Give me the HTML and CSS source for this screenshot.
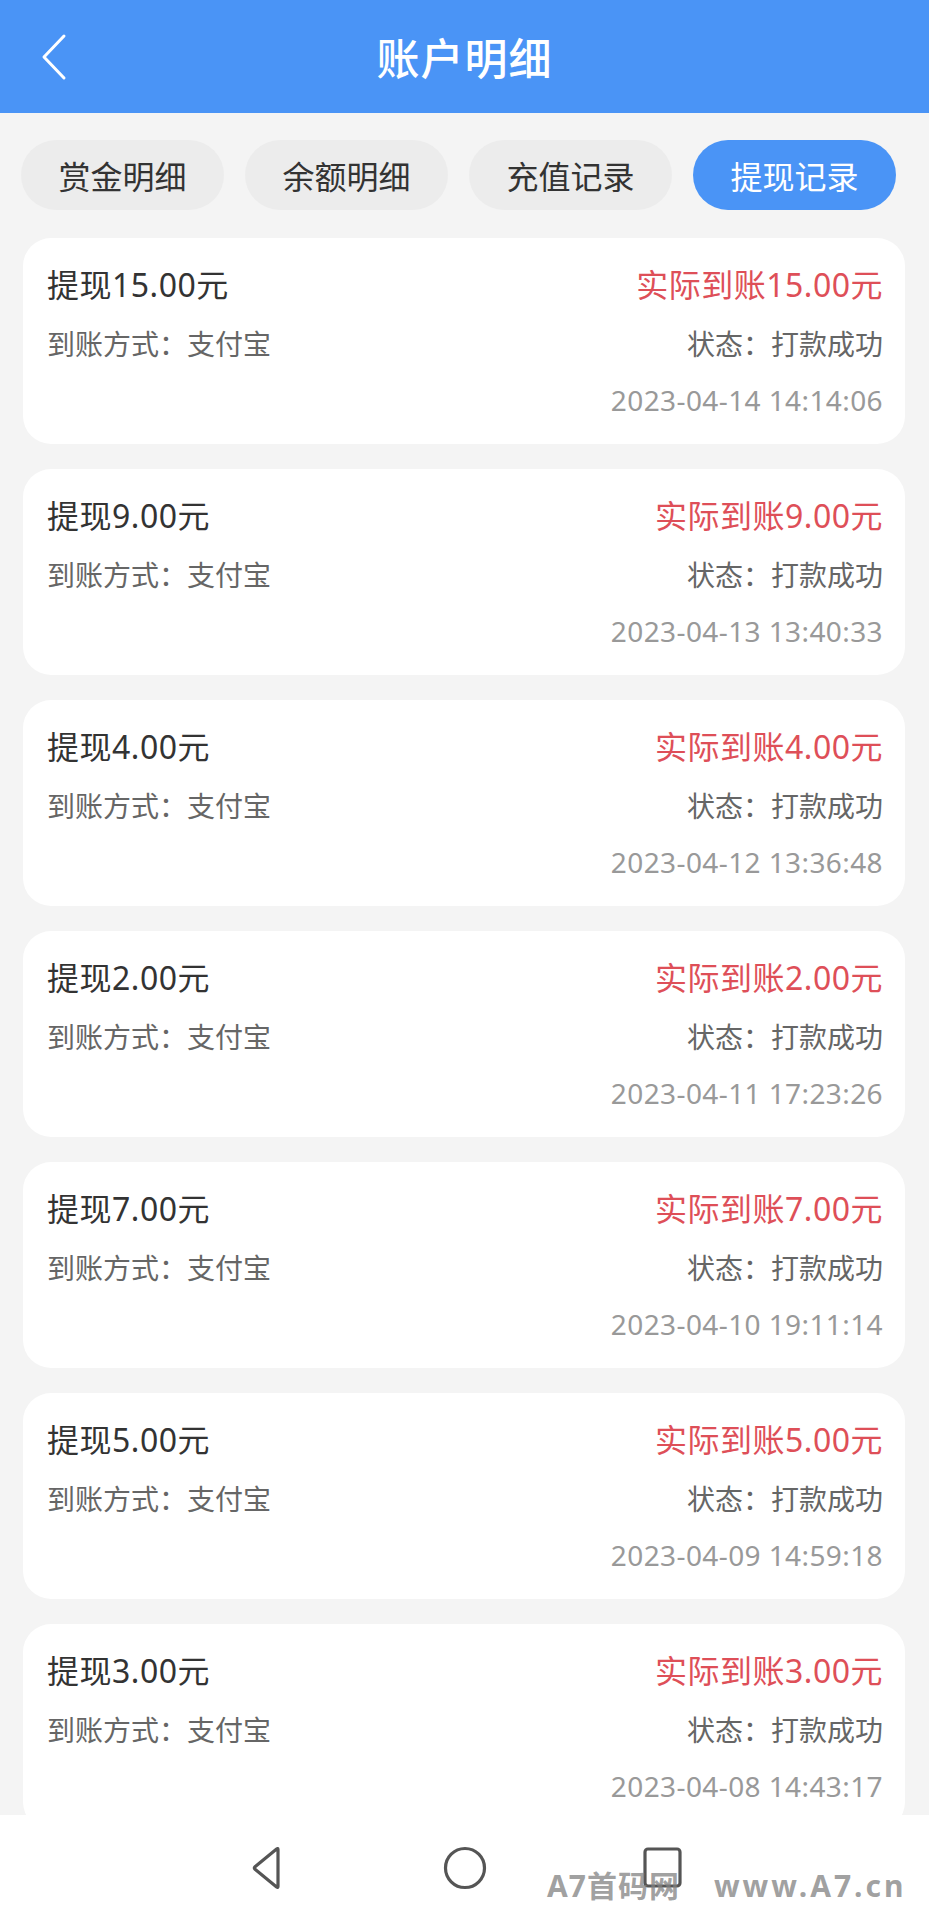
FILE: index.html
```html
<!DOCTYPE html>
<html>
<head>
<meta charset="UTF-8">
<title>账户明细</title>
<link rel="stylesheet" href="styles.css">
</head>
<body>
  <div class="page">
    <div class="top-bar">
      <div class="back-btn">
        <svg width="28" height="48" viewBox="0 0 28 48">
          <path d="M24 3 L4 24 L24 45" fill="none" stroke="#fff" stroke-width="3" stroke-linecap="round" stroke-linejoin="round"/>
        </svg>
      </div>
      <div class="title">账户明细</div>
      <div></div>
    </div>

    <div class="content">
      <div class="tabs">
        <div class="tab">赏金明细</div>
        <div class="tab">余额明细</div>
        <div class="tab">充值记录</div>
        <div class="tab active">提现记录</div>
      </div>

      <div class="record-list">
        <div class="record">
          <div class="row">
            <span class="amount">提现15.00元</span>
            <span class="real">实际到账15.00元</span>
          </div>
          <div class="row sub">
            <span>到账方式：支付宝</span>
            <span>状态：打款成功</span>
          </div>
          <div class="time">2023-04-14 14:14:06</div>
        </div>
        <div class="record">
          <div class="row">
            <span class="amount">提现9.00元</span>
            <span class="real">实际到账9.00元</span>
          </div>
          <div class="row sub">
            <span>到账方式：支付宝</span>
            <span>状态：打款成功</span>
          </div>
          <div class="time">2023-04-13 13:40:33</div>
        </div>
        <div class="record">
          <div class="row">
            <span class="amount">提现4.00元</span>
            <span class="real">实际到账4.00元</span>
          </div>
          <div class="row sub">
            <span>到账方式：支付宝</span>
            <span>状态：打款成功</span>
          </div>
          <div class="time">2023-04-12 13:36:48</div>
        </div>
        <div class="record">
          <div class="row">
            <span class="amount">提现2.00元</span>
            <span class="real">实际到账2.00元</span>
          </div>
          <div class="row sub">
            <span>到账方式：支付宝</span>
            <span>状态：打款成功</span>
          </div>
          <div class="time">2023-04-11 17:23:26</div>
        </div>
        <div class="record">
          <div class="row">
            <span class="amount">提现7.00元</span>
            <span class="real">实际到账7.00元</span>
          </div>
          <div class="row sub">
            <span>到账方式：支付宝</span>
            <span>状态：打款成功</span>
          </div>
          <div class="time">2023-04-10 19:11:14</div>
        </div>
        <div class="record">
          <div class="row">
            <span class="amount">提现5.00元</span>
            <span class="real">实际到账5.00元</span>
          </div>
          <div class="row sub">
            <span>到账方式：支付宝</span>
            <span>状态：打款成功</span>
          </div>
          <div class="time">2023-04-09 14:59:18</div>
        </div>
        <div class="record">
          <div class="row">
            <span class="amount">提现3.00元</span>
            <span class="real">实际到账3.00元</span>
          </div>
          <div class="row sub">
            <span>到账方式：支付宝</span>
            <span>状态：打款成功</span>
          </div>
          <div class="time">2023-04-08 14:43:17</div>
        </div>
      </div>
    </div>

    <div class="nav-bar">
      <svg class="nav-icon" width="44" height="44" viewBox="0 0 44 44">
        <path d="M33 3.5 L33 40.5 Q33 42 31.6 41 L10 23.2 Q8.6 22 10 20.8 L31.6 3 Q33 2 33 3.5 Z" fill="none" stroke="#555" stroke-width="3.2" stroke-linejoin="round"/>
      </svg>
      <svg class="nav-icon" width="44" height="44" viewBox="0 0 44 44">
        <circle cx="22" cy="22" r="19.5" fill="none" stroke="#555" stroke-width="3.2"/>
      </svg>
      <svg class="nav-icon" width="44" height="44" viewBox="0 0 44 44">
        <rect x="4" y="3" width="35" height="37" rx="3" fill="none" stroke="#555" stroke-width="3.2"/>
      </svg>
      <div class="watermark"><span>A7首码网</span><span class="site">www.A7.cn</span></div>
    </div>
  </div>
</body>
</html>
```

FILE: styles.css
```css
body {
  margin: 0;
  padding: 0;
  background-color: #f4f4f4;
  font-family: "Noto Sans", "Noto Sans CJK SC", sans-serif;
  color: #333;
}
.page {
  width: 929px;
  height: 1920px;
  display: flex;
  flex-direction: column;
  overflow: hidden;
}
.top-bar {
  height: 113px;
  flex-shrink: 0;
  background-color: #4a94f6;
  display: grid;
  grid-template-columns: 1fr auto 1fr;
  align-items: center;
}
.back-btn {
  padding-left: 40px;
  display: flex;
  align-items: center;
}
.top-bar .title {
  color: #fff;
  font-size: 43px;
  font-weight: 500;
  letter-spacing: 1px;
}
.content {
  flex: 1;
  overflow: hidden;
}
.tabs {
  display: flex;
  gap: 21px;
  padding: 27px 0 0 21px;
}
.tab {
  width: 203px;
  height: 70px;
  border-radius: 35px;
  background-color: #ececec;
  display: flex;
  align-items: center;
  justify-content: center;
  font-size: 32px;
  color: #333;
}
.tab.active {
  background-color: #4a94f6;
  color: #fff;
}
.record-list {
  padding: 28px 24px 0 23px;
  display: flex;
  flex-direction: column;
  gap: 25px;
}
.record {
  background-color: #fff;
  border-radius: 28px;
  height: 206px;
  box-sizing: border-box;
  padding: 27px 22px 24px 24px;
  flex-shrink: 0;
}
.row {
  display: flex;
  justify-content: space-between;
  line-height: 40px;
}
.amount {
  font-size: 32px;
  letter-spacing: 0.5px;
  color: #333;
}
.real {
  font-size: 32px;
  letter-spacing: 0.5px;
  color: #de4f58;
}
.row.sub {
  margin-top: 19px;
  font-size: 28px;
  color: #666;
}
.time {
  margin-top: 16px;
  line-height: 40px;
  font-size: 28px;
  letter-spacing: 0.4px;
  color: #999;
  text-align: right;
}
.nav-bar {
  height: 105px;
  flex-shrink: 0;
  background-color: #fff;
  display: flex;
  justify-content: center;
  align-items: center;
  gap: 154px;
  position: relative;
}
.nav-icon {
  display: block;
}
.watermark {
  position: absolute;
  left: 547px;
  top: 54px;
  display: flex;
  gap: 34px;
  font-size: 30px;
  font-weight: 700;
  line-height: 34px;
  color: rgba(130, 130, 130, 0.75);
  letter-spacing: 1px;
}
.watermark .site {
  letter-spacing: 3px;
}
```
